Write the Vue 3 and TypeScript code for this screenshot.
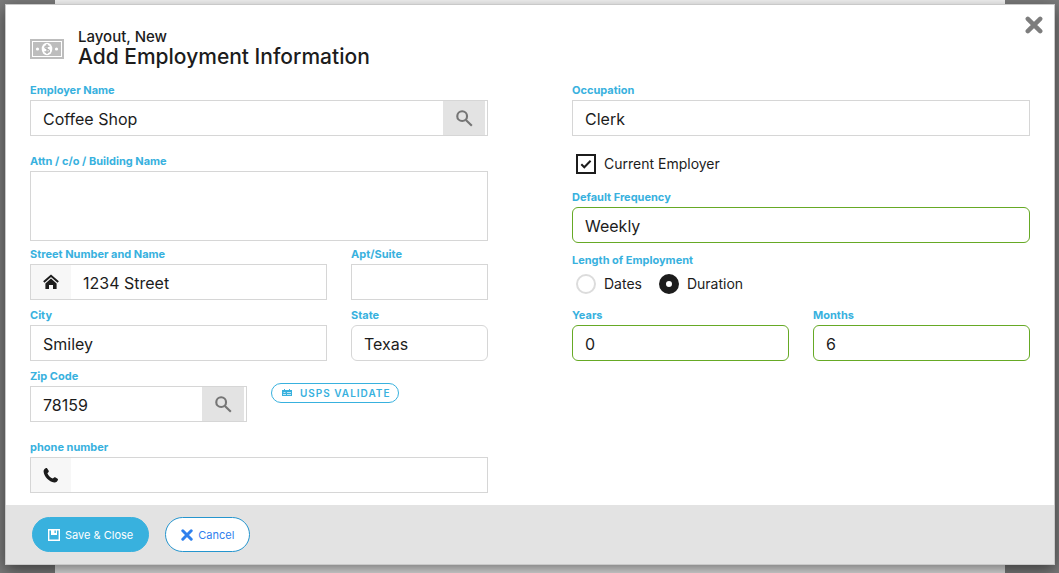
<script setup lang="ts">
import { ref } from 'vue'

const employer = ref('Coffee Shop')
const building = ref('')
const street = ref('1234 Street')
const apt = ref('')
const city = ref('Smiley')
const state = ref('Texas')
const zip = ref('78159')
const phone = ref('')
const occupation = ref('Clerk')
const isCurrent = ref(true)
const frequency = ref('Weekly')
const lengthType = ref('duration')
const years = ref('0')
const months = ref('6')

const states = ['Oklahoma', 'Texas', 'Utah']
const frequencies = ['Weekly', 'Monthly', 'Annually']
</script>

<template>
  <div class="backdrop">
    <form class="modal" role="dialog" aria-labelledby="dialog-title" @submit.prevent>
      <div class="content">
        <header class="header">
          <svg class="money" viewBox="0 0 34 20" aria-hidden="true">
            <rect width="34" height="20" fill="#bdbdbd" />
            <rect x="2.5" y="2.5" width="29" height="15" fill="none" stroke="#fff" />
            <ellipse cx="17" cy="10" rx="5.3" ry="6.2" fill="#fff" />
            <circle cx="7.5" cy="10" r="1.6" fill="#fff" />
            <circle cx="26.5" cy="10" r="1.6" fill="#fff" />
            <path d="M19.4 7.6C18.7 6.7 14.8 6.2 14.8 8.3c0 2 4.6 1.4 4.6 3.5 0 2.2-4 1.8-4.8.6M17 5v10" fill="none" stroke="#b0b0b0" stroke-width="1.3" />
          </svg>
          <div class="titles">
            <p class="person">Layout, New</p>
            <h1 id="dialog-title" class="title">Add Employment Information</h1>
          </div>
          <button type="button" class="close" aria-label="Close dialog">
            <svg viewBox="0 0 16 16"><path d="M2.5 2.5l11 11M13.5 2.5l-11 11" stroke="#7d7d7d" stroke-width="4" stroke-linecap="round" /></svg>
          </button>
        </header>

        <div class="columns">
          <div class="column">
            <div class="field spaced">
              <label for="employer">Employer Name</label>
              <div class="control">
                <input id="employer" v-model="employer" type="text" />
                <button type="button" class="search" aria-label="Search employer">
                  <svg viewBox="0 0 16 16"><circle cx="5.8" cy="5.8" r="4.6" /><path d="M9.3 9.3l5.6 5.6" /></svg>
                </button>
              </div>
            </div>
            <div class="field snug">
              <label for="building">Attn / c/o / Building Name</label>
              <textarea id="building" v-model="building" class="control area"></textarea>
            </div>
            <div class="row address">
              <div class="field">
                <label for="street">Street Number and Name</label>
                <div class="control">
                  <span class="addon">
                    <svg viewBox="0 0 16 16"><path d="M.8 8L8 1.8 15.2 8" fill="none" stroke="#1c1c1c" stroke-width="2" /><path d="M2.4 9.4L8 4.6l5.6 4.8V15H10v-4H6v4H2.4z" fill="#1c1c1c" /></svg>
                  </span>
                  <input id="street" v-model="street" type="text" />
                </div>
              </div>
              <div class="field">
                <label for="apt">Apt/Suite</label>
                <div class="control"><input id="apt" v-model="apt" type="text" /></div>
              </div>
            </div>
            <div class="row address">
              <div class="field">
                <label for="city">City</label>
                <div class="control"><input id="city" v-model="city" type="text" /></div>
              </div>
              <div class="field">
                <label for="state">State</label>
                <select id="state" v-model="state" class="control rounded">
                  <option v-for="s in states" :key="s">{{ s }}</option>
                </select>
              </div>
            </div>
            <div class="row halves zip-row">
              <div class="field">
                <label for="zip">Zip Code</label>
                <div class="control">
                  <input id="zip" v-model="zip" type="text" />
                  <button type="button" class="search" aria-label="Search zip code">
                    <svg viewBox="0 0 16 16"><circle cx="5.8" cy="5.8" r="4.6" /><path d="M9.3 9.3l5.6 5.6" /></svg>
                  </button>
                </div>
              </div>
              <button type="button" class="validate">
                <svg viewBox="0 0 10 8" aria-hidden="true"><path d="M0 1h2V0h1v1h4V0h1v1h2v6H0z" fill="#38b1de" /><path d="M1.5 3h2v1h-2zM1 5h3v1H1zM5 3h4v1H5zM5 5h4v1H5z" fill="#fff" opacity=".7" /></svg>
                USPS VALIDATE
              </button>
            </div>
            <div class="field">
              <label for="phone">phone number</label>
              <div class="control">
                <span class="addon">
                  <svg viewBox="0 0 16 16"><path d="M3.2 1C1.5 1.5.4 3 .6 4.8 1.3 10.1 5.9 14.7 11.2 15.4c1.8.2 3.3-.9 3.8-2.6.1-.4-.1-.8-.4-1l-2.4-1.5c-.4-.2-.8-.2-1.1.1l-1.3 1.2C7.3 10.6 5.4 8.7 4.4 6.2l1.2-1.3c.3-.3.3-.7.1-1.1L4.2 1.4C4 1.1 3.6.9 3.2 1z" fill="#1c1c1c" /></svg>
                </span>
                <input id="phone" v-model="phone" type="tel" />
              </div>
            </div>
          </div>

          <div class="column">
            <div class="field spaced">
              <label for="occupation">Occupation</label>
              <div class="control"><input id="occupation" v-model="occupation" type="text" /></div>
            </div>
            <label class="option current">
              <input v-model="isCurrent" type="checkbox" class="check" />
              <svg class="tick" viewBox="0 0 12 12" aria-hidden="true"><path d="M1.3 6.3l3 3L10.6 2.7" fill="none" stroke="#1c1c1c" stroke-width="2" /></svg>
              Current Employer
            </label>
            <div class="field">
              <label for="frequency">Default Frequency</label>
              <select id="frequency" v-model="frequency" class="control rounded valid">
                <option v-for="f in frequencies" :key="f">{{ f }}</option>
              </select>
            </div>
            <fieldset class="length">
              <legend>Length of Employment</legend>
              <div class="options">
                <label class="option"><input v-model="lengthType" type="radio" value="dates" name="length" class="radio" />Dates</label>
                <label class="option"><input v-model="lengthType" type="radio" value="duration" name="length" class="radio" />Duration</label>
              </div>
            </fieldset>
            <div class="row halves">
              <div class="field">
                <label for="years">Years</label>
                <div class="control rounded valid"><input id="years" v-model="years" type="text" /></div>
              </div>
              <div class="field">
                <label for="months">Months</label>
                <div class="control rounded valid"><input id="months" v-model="months" type="text" /></div>
              </div>
            </div>
          </div>
        </div>
      </div>

      <footer class="footer">
        <button type="submit" class="pill save">
          <svg viewBox="0 0 12 12" aria-hidden="true"><path d="M.7.7h10.6v10.6H.7z" fill="none" stroke="#fff" stroke-width="1.4" /><path d="M3 1h6v5H3z" fill="#fff" /><path d="M6.5 1.5h1.3V4H6.5z" fill="#38b1de" /></svg>
          Save &amp; Close
        </button>
        <button type="button" class="pill cancel">
          <svg viewBox="0 0 12 12" aria-hidden="true"><path d="M1.8 1.8l8.4 8.4M10.2 1.8l-8.4 8.4" stroke="#2f80ed" stroke-width="3" stroke-linecap="round" /></svg>
          Cancel
        </button>
      </footer>
    </form>
  </div>
</template>

<style>
body {
  margin: 0;
}
</style>

<style scoped>
* {
  box-sizing: border-box;
}

.backdrop {
  min-height: 100vh;
  padding: 4px 4px 8px 5px;
  overflow: hidden;
  background:
    linear-gradient(to right, #7b7b7b 55px, transparent 55px, transparent calc(100% - 54px), #7b7b7b calc(100% - 54px)),
    linear-gradient(to bottom, #f7f7f7 50%, #e6e6e6 50%);
  color: #1c1c1c;
  font-family: Inter, "Liberation Sans", sans-serif;
}

button,
input,
select,
textarea {
  font: inherit;
  color: inherit;
}

button {
  cursor: pointer;
}

.modal {
  border: 1px solid #c9c9c9;
  background: #fff;
  box-shadow: 0 5px 15px rgba(0, 0, 0, 0.5);
}

.content {
  padding: 23px 24px 12px;
}

.header {
  position: relative;
  display: flex;
  align-items: center;
  gap: 14px;
  margin-bottom: 14px;
}

.money {
  width: 34px;
  height: 20px;
  margin-top: 2px;
}

.person,
.title {
  margin: 0;
}

.person {
  font-size: 15px;
  font-weight: 500;
  line-height: 18px;
}

.title {
  font-size: 21px;
  font-weight: 500;
  line-height: 22px;
}

.close {
  position: absolute;
  top: -12px;
  right: -13px;
  width: 18px;
  height: 18px;
  padding: 0;
  border: 0;
  background: none;
}

.close svg {
  display: block;
}

.columns {
  display: grid;
  grid-template-columns: 1fr 1fr;
  column-gap: 84px;
}

.field {
  display: flex;
  flex-direction: column;
  gap: 2px;
  min-width: 0;
}

.field > label,
.length legend {
  padding: 0;
  color: #38b1de;
  font-size: 11px;
  font-weight: 700;
  line-height: 16px;
}

.spaced {
  margin-bottom: 17px;
}

.snug {
  margin-bottom: 5px;
}

.control {
  display: flex;
  width: 100%;
  height: 36px;
  border: 1px solid #d6d6d6;
  background: #fff;
  overflow: hidden;
}

.area {
  height: 70px;
  padding: 8px 12px;
  font-size: 16px;
  resize: none;
}

.control input {
  flex: 1;
  min-width: 0;
  padding: 2px 12px 0;
  border: 0;
  outline: 0;
  background: transparent;
  font-size: 16px;
}

select.control {
  padding: 2px 12px 0;
  appearance: none;
  font-size: 16px;
}

.rounded {
  border-radius: 6px;
}

.valid {
  border-color: #66a925;
}

.addon {
  display: flex;
  align-items: center;
  justify-content: center;
  width: 40px;
  background: #f7f7f7;
}

.addon svg {
  width: 16px;
  height: 16px;
}

.search {
  display: flex;
  align-items: center;
  justify-content: center;
  width: 42px;
  margin-right: 2px;
  padding: 0;
  border: 0;
  background: #e3e3e3;
}

.search svg {
  width: 17px;
  height: 17px;
  fill: none;
  stroke: #757575;
  stroke-width: 2;
}

.row {
  display: grid;
  column-gap: 24px;
}

.address {
  grid-template-columns: 297fr 137fr;
  margin-bottom: 7px;
}

.halves {
  grid-template-columns: 1fr 1fr;
}

.zip-row {
  margin-bottom: 17px;
}

.validate {
  display: flex;
  align-items: center;
  justify-content: center;
  gap: 8px;
  justify-self: start;
  height: 20px;
  margin-top: 15px;
  padding: 0 8px 0 10px;
  border: 1px solid #38b1de;
  border-radius: 10px;
  background: #fff;
  color: #38b1de;
  font-size: 10px;
  font-weight: 600;
  letter-spacing: 1px;
}

.validate svg {
  width: 10px;
  height: 8px;
}

.option {
  position: relative;
  display: flex;
  align-items: center;
  gap: 8px;
  font-size: 14px;
  line-height: 20px;
}

.current {
  margin: 0 0 15px 4px;
  padding-top: 1px;
}

.check,
.radio {
  appearance: none;
  width: 20px;
  height: 20px;
  margin: 0;
  border: 2px solid #1c1c1c;
  background: #fff;
}

.tick {
  position: absolute;
  top: 5px;
  left: 4px;
  width: 12px;
  height: 12px;
  opacity: 0;
  pointer-events: none;
}

.check:checked + .tick {
  opacity: 1;
}

.radio {
  border-color: #dcdcdc;
  border-radius: 50%;
}

.radio:checked {
  border: 7px solid #1c1c1c;
}

.length {
  margin: 9px 0 13px;
  padding: 0;
  border: 0;
}

.options {
  display: flex;
  gap: 17px;
  margin: 6px 0 0 4px;
}

.footer {
  display: flex;
  gap: 16px;
  padding: 12px 26px;
  background: #e3e3e3;
}

.pill {
  display: flex;
  align-items: center;
  gap: 5px;
  height: 35px;
  padding: 0 15px;
  border: 1px solid #38b1de;
  border-radius: 18px;
  font-size: 11px;
}

.pill svg {
  width: 12px;
  height: 12px;
}

.save {
  background: #38b1de;
  color: #fff;
}

.cancel {
  border-color: #2595ce;
  background: #fff;
  color: #2f80ed;
}
</style>
